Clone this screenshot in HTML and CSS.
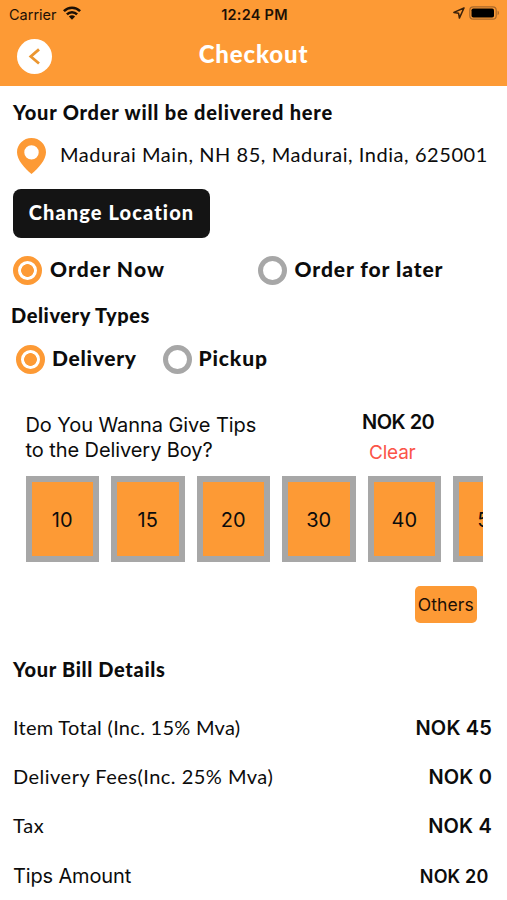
FILE: index.html
```html
<!DOCTYPE html>
<html lang="en">
<head>
<meta charset="utf-8">
<title>Checkout</title>
<link rel="stylesheet" href="styles.css">
</head>
<body>
<header class="top">
  <div class="status">
    <div class="carrier"><span>Carrier</span>
      <svg width="18" height="14" viewBox="0 0 18 14"><g fill="none" stroke="#1c1005" stroke-width="2.5"><path d="M.9 5.200C5.400.5 12.600.5 17.100 5.200"/><path d="M3.900 8.400c2.800-3 7.400-3 10.200 0"/></g><path d="M9 13.800 5.900 10.500c1.700-1.700 4.500-1.700 6.200 0z" fill="#1c1005"/></svg>
    </div>
    <div class="clock">12:24 PM</div>
    <div class="indicators">
      <svg width="12" height="12" viewBox="0 0 12 12"><path d="M11 1 .9 5.400l4.700.9.8 4.800z" fill="none" stroke="#3a210a" stroke-width="1.5" stroke-linejoin="round"/></svg>
      <svg width="31" height="14" viewBox="0 0 31 14"><rect x=".8" y=".8" width="26.400" height="12.400" rx="3.500" fill="none" stroke="#a9682a" stroke-width="1.200"/><rect x="2.500" y="2.500" width="22.500" height="9" rx="1.800" fill="#000"/><path d="M28.600 4.800c1.800.5 1.800 3.900 0 4.400z" fill="#a9682a"/></svg>
    </div>
  </div>
  <div class="nav">
    <button class="back" aria-label="Back"><svg width="35" height="35" viewBox="0 0 35 35"><path d="m22 10.400-8.200 7.100 8.200 7" fill="none" stroke="#eb9630" stroke-width="2.800"/></svg></button>
    <h1>Checkout</h1>
  </div>
</header>
<main>
  <h2 class="heading deliver">Your Order will be delivered here</h2>
  <div class="address">
    <svg width="30" height="38" viewBox="0 0 30 38"><path fill-rule="evenodd" d="M14.500 0C6.500 0 0 6.300 0 14.200c0 7.600 7.500 15.800 14.500 21.900 7-6.100 14.500-14.300 14.500-21.900C29 6.300 22.500 0 14.500 0zM14.500 7.200a7.200 7.200 0 1 1 0 14.400a7.200 7.200 0 0 1 0-14.400z" fill="#fd9a35"/></svg>
    <span>Madurai Main, NH 85, Madurai, India, 625001</span>
  </div>
  <button class="change">Change Location</button>
  <div class="options when">
    <div class="option"><i class="radio on"></i><span class="t-now">Order Now</span></div>
    <div class="option"><i class="radio"></i><span class="t-later">Order for later</span></div>
  </div>
  <h2 class="heading types">Delivery Types</h2>
  <div class="options how">
    <div class="option"><i class="radio on"></i><span class="t-del">Delivery</span></div>
    <div class="option"><i class="radio"></i><span class="t-pick">Pickup</span></div>
  </div>
  <section class="tips">
    <div class="ask">
      <p>Do You Wanna Give Tips<br>to the Delivery Boy?</p>
      <div class="chosen"><b>NOK 20</b><a>Clear</a></div>
    </div>
    <div class="tiles"><div>10</div><div>15</div><div>20</div><div>30</div><div>40</div><div>50</div></div>
    <button class="others">Others</button>
  </section>
  <h2 class="heading bill">Your Bill Details</h2>
  <div class="row"><span class="r-item">Item Total (Inc. 15% Mva)</span><b>NOK 45</b></div>
  <div class="row"><span class="r-fees">Delivery Fees(Inc. 25% Mva)</span><b>NOK 0</b></div>
  <div class="row"><span class="r-tax">Tax</span><b>NOK 4</b></div>
  <div class="row last"><span>Tips Amount</span><b>NOK 20</b></div>
</main>
</body>
</html>
```
FILE: styles.css
```css
* { box-sizing: border-box; }
body { margin: 0; width: 507px; height: 900px; overflow: hidden; background: #fff; color: #0c0c0c; font: 20px Lato, sans-serif; }
h1, h2, p { margin: 0; }
button { border: 0; padding: 0; display: block; }
svg { display: block; flex: none; }
span, b, a, h1, h2 { white-space: nowrap; }

.top { height: 86px; background: #fd9a35; }
.status { display: grid; grid-template-columns: 1fr auto 1fr; align-items: center; height: 28px; padding: 0 7px 0 9px; font: 14.5px Inter, sans-serif; color: #1c1005; }
.carrier, .indicators { display: flex; align-items: center; gap: 6px; }
.carrier svg { margin-top: -3px; }
.indicators { justify-content: flex-end; gap: 4px; margin-top: -2px; }
.clock { font-weight: 600; letter-spacing: .25px; }
.nav { display: grid; grid-template-columns: 35px 1fr 35px; align-items: center; height: 56px; padding: 0 17px; }
.back { width: 35px; height: 35px; border-radius: 50%; background: #fff; }
h1 { color: #fff; font-size: 24px; line-height: 28px; text-align: center; margin-top: -4px; letter-spacing: .85px; font-weight: 900; }

.heading { font-size: 20px; line-height: 24px; height: 24px; font-weight: 900; margin-left: 13px; }
.deliver { margin-top: 14px; letter-spacing: .8px; }
.address { display: flex; height: 38px; margin: 13px 0 0 17px; gap: 13px; line-height: 34px; letter-spacing: .56px; }
.address svg { margin-top: 1px; }
.change { width: 197px; height: 49px; margin: 14px 0 0 13px; padding-bottom: 3px; border-radius: 8px; background: #141414; color: #fff; font: 900 20px Lato, sans-serif; letter-spacing: 1.1px; }
.options { display: flex; height: 30px; font-weight: 900; font-size: 21px; }
.option { display: flex; gap: 8px; line-height: 26px; }
.radio { flex: none; width: 29px; height: 29px; border: 5px solid #a7a7a7; border-radius: 50%; }
.radio.on { border-color: #fd9a35; background: radial-gradient(circle, #fd9a35 6px, #fff 6.7px); }
.when { margin: 18px 0 0 13px; }
.when .option:first-child { width: 244.5px; }
.t-now { letter-spacing: 1.1px; }
.t-later { letter-spacing: .92px; }
.types { margin: 17px 0 0 11px; letter-spacing: .57px; }
.how { margin: 18px 0 0 16px; }
.how .option { gap: 7px; }
.how .option:first-child { width: 146.5px; }
.t-del { letter-spacing: .7px; }
.t-pick { letter-spacing: .85px; }

.tips { margin: 38px 24.5px 0 25.5px; font-family: Inter, sans-serif; }
.ask { display: flex; justify-content: space-between; height: 63px; line-height: 24.5px; letter-spacing: -.08px; }
.chosen { display: flex; flex-direction: column; width: 120.5px; margin-top: -3.5px; }
.chosen b { font-weight: 600; letter-spacing: -.5px; }
.chosen a { margin: 6.5px 0 0 7px; color: #fb5448; font-size: 19px; letter-spacing: -.2px; }
.tiles { display: flex; gap: 12px; height: 85.5px; overflow: hidden; }
.tiles div { flex: none; width: 73.5px; border: 6px solid #a7a7a7; background: #fd9a35; line-height: 76px; text-align: center; }
.others { width: 61.5px; height: 36.5px; margin: 24.5px 6px 0 auto; border-radius: 5px; background: #fd9a35; color: #1c1005; font: 17.5px Inter, sans-serif; letter-spacing: .1px; }

.bill { margin-top: 34.5px; margin-bottom: 21.5px; letter-spacing: .65px; }
.row { display: flex; justify-content: space-between; height: 49px; line-height: 48px; padding: 0 15px 0 13px; }
.row b { font-family: Inter, sans-serif; font-weight: 600; line-height: 50px; letter-spacing: .15px; }
.r-item { letter-spacing: .28px; }
.r-fees { letter-spacing: .48px; }
.r-tax { letter-spacing: .7px; }
.last { margin-top: 2.5px; padding-right: 18.5px; font-family: Inter, sans-serif; line-height: 49px; letter-spacing: -.15px; }
.last b { font-size: 18px; line-height: 49px; }
```
